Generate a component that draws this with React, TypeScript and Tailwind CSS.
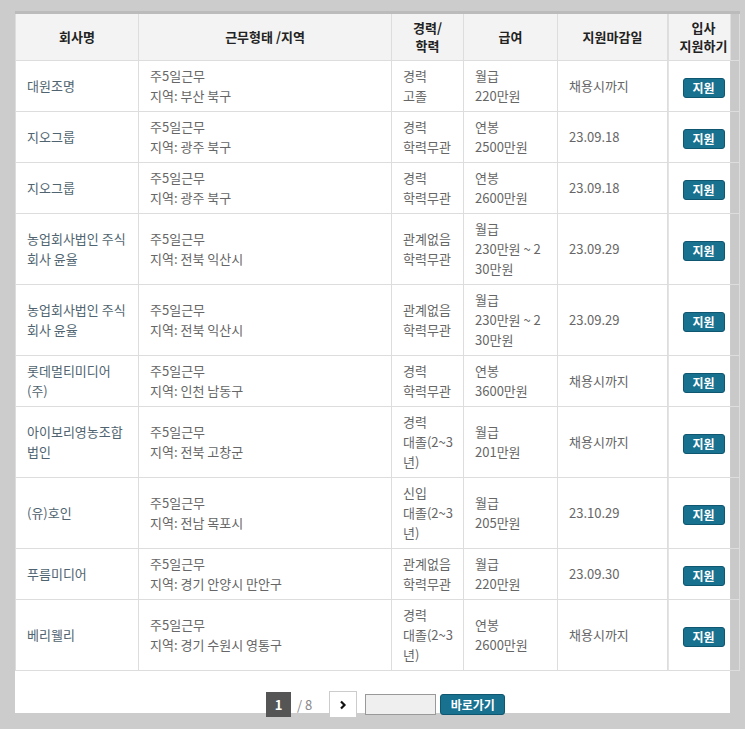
import React from "react";

interface JobRow {
  company: string[];
  work: string[];
  career: string[];
  pay: string[];
  deadline: string;
}

const jobs: JobRow[] = [
  { company: ["대원조명"], work: ["주5일근무", "지역: 부산 북구"], career: ["경력", "고졸"], pay: ["월급", "220만원"], deadline: "채용시까지" },
  { company: ["지오그룹"], work: ["주5일근무", "지역: 광주 북구"], career: ["경력", "학력무관"], pay: ["연봉", "2500만원"], deadline: "23.09.18" },
  { company: ["지오그룹"], work: ["주5일근무", "지역: 광주 북구"], career: ["경력", "학력무관"], pay: ["연봉", "2600만원"], deadline: "23.09.18" },
  { company: ["농업회사법인 주식", "회사 윤율"], work: ["주5일근무", "지역: 전북 익산시"], career: ["관계없음", "학력무관"], pay: ["월급", "230만원 ~ 2", "30만원"], deadline: "23.09.29" },
  { company: ["농업회사법인 주식", "회사 윤율"], work: ["주5일근무", "지역: 전북 익산시"], career: ["관계없음", "학력무관"], pay: ["월급", "230만원 ~ 2", "30만원"], deadline: "23.09.29" },
  { company: ["롯데멀티미디어", "(주)"], work: ["주5일근무", "지역: 인천 남동구"], career: ["경력", "학력무관"], pay: ["연봉", "3600만원"], deadline: "채용시까지" },
  { company: ["아이보리영농조합", "법인"], work: ["주5일근무", "지역: 전북 고창군"], career: ["경력", "대졸(2~3", "년)"], pay: ["월급", "201만원"], deadline: "채용시까지" },
  { company: ["(유)호인"], work: ["주5일근무", "지역: 전남 목포시"], career: ["신입", "대졸(2~3", "년)"], pay: ["월급", "205만원"], deadline: "23.10.29" },
  { company: ["푸름미디어"], work: ["주5일근무", "지역: 경기 안양시 만안구"], career: ["관계없음", "학력무관"], pay: ["월급", "220만원"], deadline: "23.09.30" },
  { company: ["베리웰리"], work: ["주5일근무", "지역: 경기 수원시 영통구"], career: ["경력", "대졸(2~3", "년)"], pay: ["연봉", "2600만원"], deadline: "채용시까지" },
];

const Lines = ({ lines }: { lines: string[] }) => (
  <>
    {lines.map((l, i) => (
      <div key={i} className="whitespace-nowrap">{l}</div>
    ))}
  </>
);

const th = "border border-[#dddddd] bg-[#f3f3f3] text-center align-middle font-bold text-[13px] leading-[18px] text-[#222222]";
const td = "border border-[#dddddd] px-[11px] py-[5px] align-middle text-[13px] leading-[20px] text-[#666666]";

export default function App() {
  return (
    <div
      className="min-h-[729px] bg-[#cccccc] pt-[11px]"
      style={{ fontFamily: '"Noto Sans CJK KR", "Noto Sans", sans-serif' }}
    >
      <div className="ml-[15px] h-[702px] w-[715px] bg-white">
        <table className="w-[724px] table-fixed border-collapse border-t-[3px] border-t-[#bbbbbb]">
          <colgroup>
            <col className="w-[123px]" />
            <col className="w-[253px]" />
            <col className="w-[72px]" />
            <col className="w-[94px]" />
            <col className="w-[110px]" />
            <col className="w-[72px]" />
          </colgroup>
          <thead>
            <tr className="h-[48px]">
              <th className={th}>회사명</th>
              <th className={th}>근무형태 /지역</th>
              <th className={th}>경력/<br />학력</th>
              <th className={th}>급여</th>
              <th className={th}>지원마감일</th>
              <th className="border border-[#dddddd] bg-[linear-gradient(to_right,#f3f3f3_62px,#c9c9c9_62px)] text-center align-middle font-bold text-[13px] leading-[18px] text-[#222222]">
                입사<br />지원하기
              </th>
            </tr>
          </thead>
          <tbody>
            {jobs.map((job, i) => (
              <tr key={i}>
                <td className={td + " !text-[#4f6470]"}><Lines lines={job.company} /></td>
                <td className={td}><Lines lines={job.work} /></td>
                <td className={td}><Lines lines={job.career} /></td>
                <td className={td}><Lines lines={job.pay} /></td>
                <td className={td}>{job.deadline}</td>
                <td className="border border-[#dddddd] bg-[linear-gradient(to_right,transparent_62px,#c9c9c9_62px)] text-center align-middle">
                  <button className="h-[20px] w-[42px] rounded-[3px] border border-[#0f5670] bg-[#17718f] text-[12px] font-bold leading-[18px] text-white">
                    지원
                  </button>
                </td>
              </tr>
            ))}
          </tbody>
        </table>

        <div className="mt-[20px] flex items-center pl-[251px]">
          <span className="flex h-[25px] w-[25px] items-center justify-center bg-[#555555] text-[13px] font-bold text-white">1</span>
          <span className="ml-[6px] text-[13px] text-[#888888]">/ 8</span>
          <button className="ml-[17px] flex h-[27px] w-[28px] items-center justify-center border border-[#cccccc] bg-white">
            <svg width="8" height="10" viewBox="0 0 8 10">
              <path d="M2 1.5 L5.5 5 L2 8.5" stroke="#111" strokeWidth="2.2" fill="none" />
            </svg>
          </button>
          <input className="ml-[8px] h-[21px] w-[71px] border border-[#999999] bg-[#efefef]" />
          <button className="ml-[4px] h-[21px] w-[65px] rounded-[3px] border border-[#0f5670] bg-[#17718f] text-[12px] font-bold leading-[18px] text-white">
            바로가기
          </button>
        </div>
      </div>
    </div>
  );
}
